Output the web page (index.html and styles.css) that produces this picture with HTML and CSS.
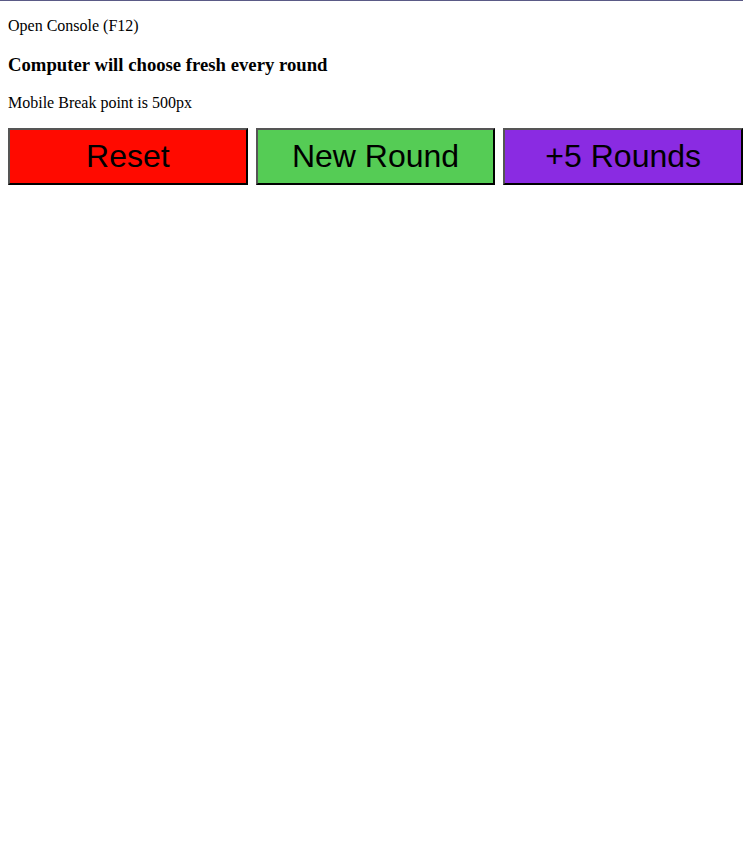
FILE: index.html
```html
<!DOCTYPE html>
<html>
<head>
<meta charset="utf-8">
<link rel="stylesheet" href="styles.css">
</head>
<body>
<p class="first">Open Console (F12)</p>
<h3>Computer will choose fresh every round</h3>
<p>Mobile Break point is 500px</p>
<div class="buttons">
  <button class="btn btn-reset">Reset</button>
  <button class="btn btn-new">New Round</button>
  <button class="btn btn-five">+5 Rounds</button>
</div>
</body>
</html>
```
FILE: styles.css
```css
html {
  border-top: 1px solid #5a5a86;
}
body {
  margin: 0 0 8px 8px;
  font-family: "Liberation Serif", "Times New Roman", serif;
  font-size: 16px;
  color: #000;
  background: #fff;
}
.buttons {
  display: flex;
  gap: 8px;
}
.btn {
  flex: 1 1 0;
  height: 57px;
  font-family: "Liberation Sans", Arial, sans-serif;
  font-size: 32px;
  color: #000;
  border: 2px solid #000;
  border-top-color: #555;
  border-left-color: #555;
  padding: 0;
}
.btn-reset { background: #ff0a00; }
.btn-new { background: #55cc55; }
.btn-five { background: #8a2be2; }
```
